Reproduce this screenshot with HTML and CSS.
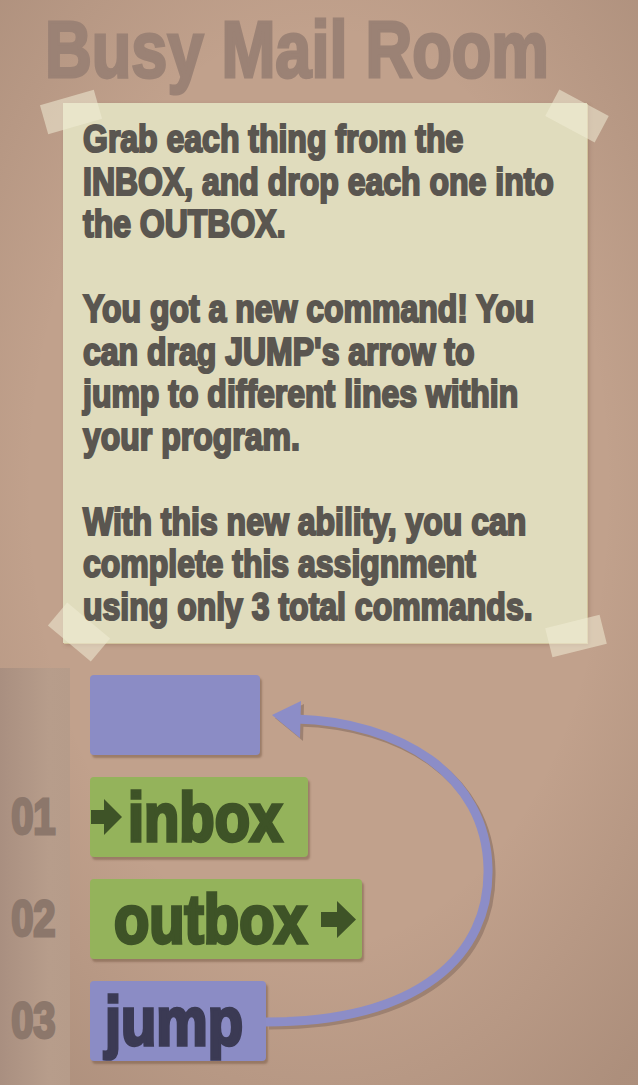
FILE: index.html
```html
<!DOCTYPE html>
<html>
<head>
<meta charset="utf-8">
<title>Busy Mail Room</title>
<link rel="stylesheet" href="styles.css">
</head>
<body>
<div class="page">
  <h1 class="title">Busy Mail Room</h1>
  <div class="note">
    <span class="tape tape-tl"></span>
    <span class="tape tape-tr"></span>
    <span class="tape tape-bl"></span>
    <span class="tape tape-br"></span>
    <p class="note-text">Grab each thing from the<br>INBOX, and drop each one into<br>the OUTBOX.<br><br>You got a new command! You<br>can drag JUMP's arrow to<br>jump to different lines within<br>your program.<br><br>With this new ability, you can<br>complete this assignment<br>using only 3 total commands.</p>
  </div>
  <div class="program">
    <div class="gutter">
      <div class="num"></div>
      <div class="num"><span>01</span></div>
      <div class="num"><span>02</span></div>
      <div class="num"><span>03</span></div>
    </div>
    <div class="blocks">
      <div class="block block-target"></div>
      <div class="block block-inbox">
        <svg class="cmd-arrow" width="31" height="36" viewBox="0 0 31 36"><path d="M0 11 H13 V0 L31 18 L13 36 V25 H0 Z" fill="#3e5327"/></svg>
        <span class="cmd cmd-inbox">inbox</span>
      </div>
      <div class="block block-outbox">
        <span class="cmd cmd-outbox">outbox</span>
        <svg class="cmd-arrow" width="35" height="37" viewBox="0 0 35 37"><path d="M0 11 H16 V0 L35 18.5 L16 37 V26 H0 Z" fill="#3e5327"/></svg>
      </div>
      <div class="block block-jump"><span class="cmd cmd-jump">jump</span></div>
    </div>
    <svg class="jump-line" width="638" height="417" viewBox="0 668 638 417">
      <g transform="translate(3,3)" fill="none" stroke="#9d8171" stroke-width="9">
        <path d="M266 1022 C 420 1022 490 955 488 868 C 486 775 400 722 296 719"/>
      </g>
      <polygon points="275,718 304,704 303,741" fill="#9d8171"/>
      <path d="M266 1022 C 420 1022 490 955 488 868 C 486 775 400 722 296 719" fill="none" stroke="#8c8dc7" stroke-width="9"/>
      <polygon points="272,715 301,701 300,738" fill="#8c8dc7"/>
    </svg>
  </div>
</div>
</body>
</html>
```
FILE: styles.css
```css
html, body {
  margin: 0;
  padding: 0;
}
body {
  width: 638px;
  height: 1085px;
  overflow: hidden;
  background-color: #c1a18c;
  background-image: radial-gradient(ellipse 75% 70% at 50% 45%, rgba(0,0,0,0) 60%, rgba(80,60,50,0.18) 100%);
  font-family: "Liberation Sans", Arial, sans-serif;
  font-weight: bold;
}
.page {
  display: flex;
  flex-direction: column;
  height: 1085px;
}
.title {
  margin: 10px 0 0 45px;
  font-size: 79px;
  line-height: 79px;
  height: 79px;
  color: #9b8275;
  font-weight: bold;
  white-space: nowrap;
  -webkit-text-stroke: 3px #9b8275;
  transform: scaleX(0.82);
  transform-origin: left top;
}
.note {
  position: relative;
  margin: 14px 0 0 63px;
  width: 524px;
  height: 540px;
  box-sizing: border-box;
  padding: 15px 20px;
  background: #e0dcbd;
  box-shadow: 1px 1px 0 #d2c49c, 2px 2px 4px rgba(90,60,40,0.25);
}
.note-text {
  margin: 0;
  font-size: 39px;
  line-height: 42.5px;
  color: #5a5650;
  white-space: nowrap;
  -webkit-text-stroke: 2.2px #5a5650;
  transform: scaleX(0.82);
  transform-origin: left top;
}
.tape {
  position: absolute;
  background: rgba(240, 236, 214, 0.55);
  width: 56px;
  height: 30px;
}
.tape-tl { left: -20px; top: -6px; transform: rotate(-16deg); }
.tape-tr { right: -18px; top: -2px; transform: rotate(28deg); }
.tape-bl { left: -12px; bottom: -4px; transform: rotate(40deg); }
.tape-br { right: -17px; bottom: -8px; transform: rotate(-14deg); }

.program {
  position: relative;
  display: flex;
  margin-top: 25px;
  flex: 1;
}
.gutter {
  width: 70px;
  box-sizing: border-box;
  padding: 7px 15px 0 0;
  background: linear-gradient(to right, #a98f80, #b79d8b 70%, #b69c8a);
  display: flex;
  flex-direction: column;
  gap: 22px;
}
.num {
  height: 80px;
  line-height: 80px;
  text-align: right;
  font-size: 50px;
  color: #8c776b;
}
.num span {
  display: inline-block;
  -webkit-text-stroke: 3px #8c776b;
  transform: scaleX(0.8);
  transform-origin: right center;
}
.blocks {
  margin-left: 20px;
  padding-top: 7px;
  display: flex;
  flex-direction: column;
  gap: 22px;
  align-items: flex-start;
}
.block {
  height: 80px;
  box-sizing: border-box;
  border-radius: 4px;
  display: flex;
  align-items: center;
  font-size: 68px;
  line-height: 80px;
  box-shadow: 2px 3px 2px rgba(110, 80, 60, 0.45);
}
.cmd {
  display: inline-block;
  white-space: nowrap;
  -webkit-text-stroke: 3.5px currentColor;
  transform: scaleX(0.85);
  transform-origin: left center;
}
.cmd-inbox { margin-right: -27px; }
.cmd-outbox { margin-right: -34px; }
.cmd-jump { margin-right: -24px; }
.block-target {
  width: 170px;
  background: #8b8cc5;
}
.block-inbox {
  width: 218px;
  background: #94b35b;
  color: #3e5327;
  padding-left: 1px;
  gap: 6px;
}
.block-outbox {
  width: 272px;
  background: #94b35b;
  color: #3e5327;
  padding-left: 24px;
  gap: 14px;
}
.block-jump {
  width: 176px;
  background: #8b8cc5;
  color: #3b3a54;
  padding-left: 15px;
}
.cmd-arrow {
  flex: none;
}
.jump-line {
  position: absolute;
  left: 0;
  top: 0;
  pointer-events: none;
}
```
